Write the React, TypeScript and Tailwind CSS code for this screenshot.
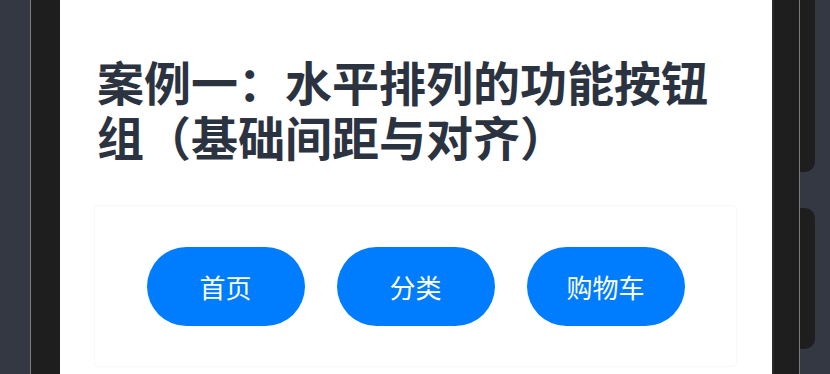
import * as React from "react";

/* ── Button group data ── */
const BUTTONS = ["首页", "分类", "购物车"];

function SideKeys() {
  return (
    <div className="flex w-[30px] shrink-0 flex-col gap-[36px]">
      <div className="h-[172px] w-[15px] rounded-br-[10px] bg-[#1e1e1e]" />
      <div className="h-[141px] w-[15px] rounded-r-[10px] bg-[#1e1e1e]" />
    </div>
  );
}

export default function App() {
  return (
    <div
      className="flex h-[374px] w-[830px] overflow-hidden bg-[#343842]"
      style={{ fontFamily: '"Noto Sans CJK SC", "Noto Sans", sans-serif' }}
    >
      <div className="w-[30px] shrink-0" />

      {/* phone frame */}
      <div className="flex h-full w-[770px] shrink-0 border-x border-[#7b7b7b] bg-[#1e1e1e] pl-[29px] pr-[25px]">
        <div className="h-full w-[714px] border-r-2 border-[#2a2a2a] bg-white">
          <div className="pl-[37px] pr-[36px] pt-[53px]">
            <h1 className="text-[47px] font-bold leading-[55px] text-[#2c3340]">
              案例一：水平排列的功能按钮组（基础间距与对齐）
            </h1>
          </div>

          <div className="ml-[34px] mt-[42px] flex h-[162px] w-[643px] items-center justify-center gap-[32px] rounded-[4px] border border-[#f8f8f8]">
            {BUTTONS.map((label) => (
              <button
                key={label}
                type="button"
                className="flex h-[79px] w-[158px] items-center justify-center rounded-full bg-[#007dfe] text-[26px] text-white"
              >
                {label}
              </button>
            ))}
          </div>
        </div>
      </div>

      <SideKeys />
    </div>
  );
}
